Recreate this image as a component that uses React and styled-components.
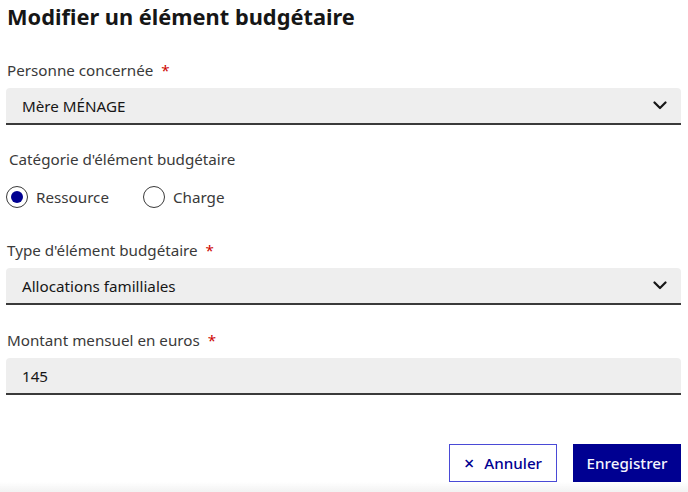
import React from 'react'
import styled, { createGlobalStyle } from 'styled-components'

const GlobalStyle = createGlobalStyle`
    body {
        margin: 0;
        background: #fff;
        font-family: "Noto Sans", "Liberation Sans", sans-serif;
        color: #3a3a3a;
    }
`

function Chevron() {
    return (
        <svg width="14" height="9" viewBox="0 0 14 9">
            <path d="M1.5 1.5 L7 7 L12.5 1.5" fill="none" stroke="#161616" strokeWidth="2.2" strokeLinecap="round" strokeLinejoin="round" />
        </svg>
    )
}

function App() {
    return (
        <>
            <GlobalStyle />
            <Page>
                <Title>Modifier un élément budgétaire</Title>

                <Field $gap={26}>
                    <Label>Personne concernée <Required>*</Required></Label>
                    <SelectBox>
                        <span>Mère MÉNAGE</span>
                        <Chevron />
                    </SelectBox>
                </Field>

                <Fieldset>
                    <Legend>Catégorie d'élément budgétaire</Legend>
                    <RadioRow>
                        <RadioItem>
                            <RadioCircle $checked />
                            Ressource
                        </RadioItem>
                        <RadioItem>
                            <RadioCircle />
                            Charge
                        </RadioItem>
                    </RadioRow>
                </Fieldset>

                <Field $gap={29}>
                    <Label>Type d'élément budgétaire <Required>*</Required></Label>
                    <SelectBox>
                        <span>Allocations familliales</span>
                        <Chevron />
                    </SelectBox>
                </Field>

                <Field $gap={23}>
                    <Label>Montant mensuel en euros <Required>*</Required></Label>
                    <InputBox>145</InputBox>
                </Field>

                <Actions>
                    <Button $secondary>
                        <CloseMark>×</CloseMark> Annuler
                    </Button>
                    <Button>Enregistrer</Button>
                </Actions>
            </Page>
            <Footer />
        </>
    )
}

export default App

const Page = styled.div`
    padding: 0 7px 0 6px;
    display: flex;
    flex-direction: column;
`

const Title = styled.h1`
    margin: 2px 0 0 1px;
    font-size: 21.8px;
    line-height: 30px;
    font-weight: 700;
    color: #161616;
`

const Field = styled.div`
    display: flex;
    flex-direction: column;
    margin-top: ${p => p.$gap}px;
`

const Label = styled.label`
    font-size: 15.2px;
    line-height: 24px;
    margin-left: 1px;
    margin-bottom: 6px;
    color: #3a3a3a;
`

const Required = styled.span`
    color: #ce0500;
    margin-left: 4px;
`

const SelectBox = styled.div`
    height: 35px;
    background: #eeeeee;
    border-bottom: 2px solid #3a3a3a;
    border-radius: 4px 4px 0 0;
    display: flex;
    align-items: center;
    justify-content: space-between;
    padding: 0 14px 0 16px;
    font-size: 15.2px;
    color: #161616;
`

const InputBox = styled(SelectBox)`
    justify-content: flex-start;
`

const Fieldset = styled.div`
    display: flex;
    flex-direction: column;
    margin-top: 22px;
    padding-left: 3px;
`

const Legend = styled.div`
    font-size: 15.2px;
    line-height: 24px;
    color: #3a3a3a;
`

const RadioRow = styled.div`
    display: flex;
    gap: 34px;
    margin-top: 14px;
    margin-left: -3px;
`

const RadioItem = styled.label`
    display: flex;
    align-items: center;
    gap: 8px;
    font-size: 15.2px;
    line-height: 24px;
    color: #3a3a3a;
`

const RadioCircle = styled.span`
    width: 22px;
    height: 22px;
    box-sizing: border-box;
    border-radius: 50%;
    border: 1px solid #3a3a3a;
    display: flex;
    align-items: center;
    justify-content: center;

    &::after {
        content: '';
        width: 12px;
        height: 12px;
        border-radius: 50%;
        background: ${p => (p.$checked ? '#000091' : 'transparent')};
    }
`

const Actions = styled.div`
    display: flex;
    justify-content: flex-end;
    gap: 16px;
    margin-top: 49px;
`

const Button = styled.button`
    width: 108px;
    height: 38px;
    box-sizing: border-box;
    font-family: inherit;
    font-size: 15.2px;
    font-weight: 500;
    display: flex;
    align-items: center;
    justify-content: center;
    gap: 6px;
    cursor: pointer;
    background: ${p => (p.$secondary ? '#fff' : '#000091')};
    color: ${p => (p.$secondary ? '#000091' : '#f5f5fe')};
    border: 1px solid #000091;
    border-color: ${p => (p.$secondary ? '#4a4ad6' : '#000091')};
`

const CloseMark = styled.span`
    font-size: 18px;
    line-height: 1;
    margin-right: 4px;
`

const Footer = styled.div`
    position: fixed;
    left: 0;
    right: 0;
    bottom: 0;
    height: 10px;
    background: linear-gradient(to bottom, rgba(240, 240, 240, 0), #f2f2f2);
`
